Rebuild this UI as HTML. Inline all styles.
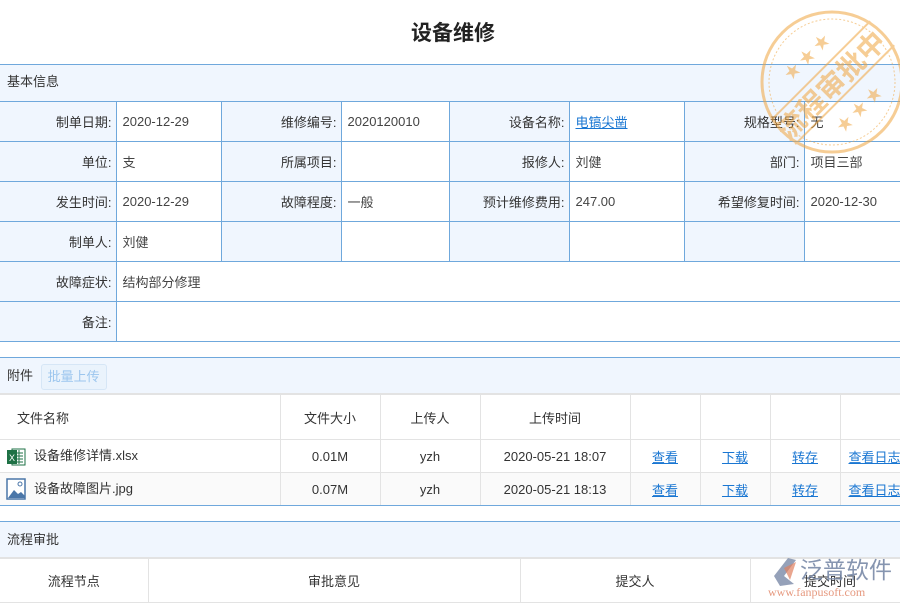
<!DOCTYPE html>
<html><head><meta charset="utf-8"><style>
*{margin:0;padding:0;box-sizing:border-box}
body{width:900px;height:600px;overflow:hidden;background:#fff;font-family:"Liberation Sans","Noto Sans CJK SC",sans-serif;font-size:13px;color:#333;position:relative}
.abs{position:absolute}
h1{position:absolute;left:0;width:906px;top:17px;text-align:center;font-size:21px;font-weight:bold;color:#222}
table{border-collapse:collapse;position:absolute;left:0;table-layout:fixed}
.info td{border:1px solid #6fa8dc;height:40px;padding:0 6px;color:#444}
.info td.l{background:#f0f6fe;text-align:right;padding-right:4px;color:#333}
.info tr td:first-child{border-left:0}
.sec{position:absolute;left:0;width:900px;background:#f0f6fe;border-top:1px solid #6fa8dc;padding-left:7px;font-size:13px}
.att td{border:1px solid #e3e3e3;text-align:center;height:33px}
.att tr.h td{height:45px}
a{color:#1976d2;text-decoration:underline}
</style></head><body>
<h1>设备维修</h1>
<div class="sec" style="top:64px;height:37px;line-height:34px">基本信息</div>
<table class="info" style="top:101px;width:906px">
<colgroup><col style="width:116px"><col style="width:105px"><col style="width:120px"><col style="width:108px"><col style="width:120px"><col style="width:115px"><col style="width:120px"><col style="width:102px"></colgroup>
<tr><td class="l">制单日期:</td><td>2020-12-29</td><td class="l">维修编号:</td><td>2020120010</td><td class="l">设备名称:</td><td><a>电镐尖凿</a></td><td class="l">规格型号:</td><td>无</td></tr>
<tr><td class="l">单位:</td><td>支</td><td class="l">所属项目:</td><td></td><td class="l">报修人:</td><td>刘健</td><td class="l">部门:</td><td>项目三部</td></tr>
<tr><td class="l">发生时间:</td><td>2020-12-29</td><td class="l">故障程度:</td><td>一般</td><td class="l">预计维修费用:</td><td>247.00</td><td class="l">希望修复时间:</td><td>2020-12-30</td></tr>
<tr><td class="l">制单人:</td><td>刘健</td><td class="l"></td><td></td><td class="l"></td><td></td><td class="l"></td><td></td></tr>
<tr><td class="l">故障症状:</td><td colspan="7">结构部分修理</td></tr>
<tr><td class="l">备注:</td><td colspan="7"></td></tr>
</table>
<div class="sec" style="top:357px;height:37px;line-height:36px;border-bottom:1px solid #e3e3e3">附件 <span style="display:inline-block;margin-left:4px;height:26px;line-height:24px;padding:0 6px;border:1px solid #d6e6f6;border-radius:3px;background:#eaf3fc;color:#9cc6ee;vertical-align:middle">批量上传</span></div>
<table class="att" style="top:394px;width:910px">
<colgroup><col style="width:280px"><col style="width:100px"><col style="width:100px"><col style="width:150px"><col style="width:70px"><col style="width:70px"><col style="width:70px"><col style="width:70px"></colgroup>
<tr class="h"><td style="text-align:left;padding-left:17px;border-left:0">文件名称</td><td>文件大小</td><td>上传人</td><td>上传时间</td><td></td><td></td><td></td><td></td></tr>
<tr><td style="text-align:left;padding-left:6px;border-left:0"><svg width="20" height="20" viewBox="0 0 20 20" style="vertical-align:middle;margin-right:8px"><rect x="6" y="2" width="13" height="16" fill="#fff" stroke="#1e7145"/><path d="M9 6h8M9 9h8M9 12h8M9 15h8M13 3v14" stroke="#1e7145" stroke-width="1"/><rect x="1" y="3" width="10" height="14" fill="#1e7145"/><text x="6" y="14" font-size="9" fill="#fff" text-anchor="middle" font-family="Liberation Sans">X</text></svg>设备维修详情.xlsx</td><td>0.01M</td><td>yzh</td><td>2020-05-21 18:07</td><td><a>查看</a></td><td><a>下载</a></td><td><a>转存</a></td><td style="text-align:left;padding-left:8px"><a>查看日志</a></td></tr>
<tr style="background:#fafafa"><td style="text-align:left;padding-left:6px;border-left:0"><svg width="20" height="22" viewBox="0 0 20 22" style="vertical-align:middle;margin-right:8px"><rect x="1" y="1" width="18" height="20" fill="#fff" stroke="#4a76a8" stroke-width="1.5"/><path d="M2 20l6-8 4 4 3-2 4 4v2z" fill="#4a76a8"/><circle cx="14" cy="6" r="2" fill="none" stroke="#4a76a8"/></svg>设备故障图片.jpg</td><td>0.07M</td><td>yzh</td><td>2020-05-21 18:13</td><td><a>查看</a></td><td><a>下载</a></td><td><a>转存</a></td><td style="text-align:left;padding-left:8px"><a>查看日志</a></td></tr>
</table>
<div class="abs" style="top:505px;left:0;width:900px;border-top:1px solid #6fa8dc"></div>
<div class="sec" style="top:521px;height:37px;line-height:36px;border-bottom:1px solid #e3e3e3">流程审批</div>
<table class="att" style="top:558px;width:910px">
<colgroup><col style="width:148px"><col style="width:372px"><col style="width:230px"><col style="width:160px"></colgroup>
<tr><td style="height:44px;border-left:0">流程节点</td><td>审批意见</td><td>提交人</td><td>提交时间</td></tr>
</table>
<svg class="abs" style="left:760px;top:550px" width="140" height="50" viewBox="0 0 140 50">
<path d="M14 26 L28 8 L36 10 L24 26 L34 34 L20 36Z" fill="#7a8aa8" opacity="0.8"/>
<path d="M24 18 L36 12 L30 30Z" fill="#e08060" opacity="0.7"/>
<text x="40" y="28" font-size="23" fill="#7a8aa8" font-family="Noto Sans CJK SC,sans-serif" opacity="0.9">泛普软件</text>
<text x="8" y="46" font-size="12" fill="#e08060" font-family="Liberation Serif,serif" opacity="0.8">www.fanpusoft.com</text>
</svg>
<svg class="abs" style="left:757px;top:6px" width="150" height="150" viewBox="0 0 150 150" opacity="0.55">
<circle cx="75" cy="76" r="70" fill="none" stroke="#f0a640" stroke-width="3"/>
<circle cx="75" cy="76" r="63" fill="none" stroke="#f0a640" stroke-width="1" stroke-dasharray="2 2"/>
<g transform="rotate(-45 75 76)">
<line x1="5" y1="60" x2="145" y2="60" stroke="#f0a640" stroke-width="2"/>
<line x1="5" y1="94" x2="145" y2="94" stroke="#f0a640" stroke-width="2"/>
<text x="72" y="88" font-size="28" font-weight="bold" fill="#f0a640" text-anchor="middle" font-family="Noto Sans CJK SC,sans-serif">流程审批中</text>
<text x="75" y="46" font-size="16" fill="#f0a640" text-anchor="middle">★ ★ ★</text>
<text x="75" y="120" font-size="16" fill="#f0a640" text-anchor="middle">★ ★ ★</text>
</g>
</svg>
</body></html>
